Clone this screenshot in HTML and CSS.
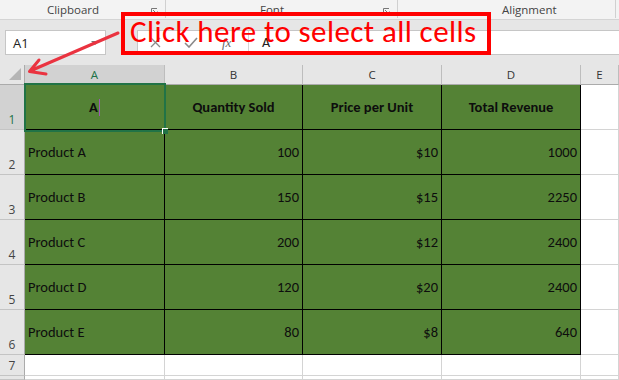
FILE: index.html
```html
<!DOCTYPE html>
<html>
<head>
<meta charset="utf-8">
<link rel="stylesheet" href="styles.css">
</head>
<body>
<div class="app">
  <div class="ribbon">
    <div class="group g1"><span>Clipboard</span>
      <svg class="launcher" viewBox="0 0 8 8"><path d="M0.5 6V0.5H6M2 2L6.5 6.5M3.5 6.5H6.5V3.5" fill="none" stroke="#777" stroke-width="1"/></svg>
    </div>
    <div class="group g2"><span>Font</span>
      <svg class="launcher" viewBox="0 0 8 8"><path d="M0.5 6V0.5H6M2 2L6.5 6.5M3.5 6.5H6.5V3.5" fill="none" stroke="#777" stroke-width="1"/></svg>
    </div>
    <div class="group g3"><span>Alignment</span></div>
  </div>

  <div class="formula-row">
    <div class="namebox"><span>A1</span><i class="caret"></i></div>
    <div class="grip"><i></i><i></i><i></i></div>
    <div class="fbar">
      <div class="fbtns">
        <svg class="ico-x" viewBox="0 0 11 11"><path d="M1 1L10 10M10 1L1 10" stroke="#8a8a8a" stroke-width="1.3" fill="none"/></svg>
        <svg class="ico-ok" viewBox="0 0 14 11"><path d="M1 6L5 10L13 1" stroke="#8a8a8a" stroke-width="1.6" fill="none"/></svg>
        <span class="fx">fx</span>
      </div>
      <div class="finput">A</div>
    </div>
  </div>

  <div class="sheet">
    <div class="corner"><svg viewBox="0 0 12 12" class="tri"><path d="M12 0V12H0Z" fill="#b5b5b5"/></svg></div>
    <div class="ch sel">A</div>
    <div class="ch">B</div>
    <div class="ch">C</div>
    <div class="ch">D</div>
    <div class="ch last">E</div>

    <div class="rh sel">1</div>
    <div class="d hd a1"><span>A</span><span class="cursor"></span><div class="selbox"><i class="handle"></i></div></div>
    <div class="d hd">Quantity Sold</div>
    <div class="d hd">Price per Unit</div>
    <div class="d hd">Total Revenue</div>
    <div class="e"></div>

    <div class="rh">2</div>
    <div class="d">Product A</div>
    <div class="d num">100</div>
    <div class="d num">$10</div>
    <div class="d num">1000</div>
    <div class="e"></div>

    <div class="rh">3</div>
    <div class="d">Product B</div>
    <div class="d num">150</div>
    <div class="d num">$15</div>
    <div class="d num">2250</div>
    <div class="e"></div>

    <div class="rh">4</div>
    <div class="d">Product C</div>
    <div class="d num">200</div>
    <div class="d num">$12</div>
    <div class="d num">2400</div>
    <div class="e"></div>

    <div class="rh">5</div>
    <div class="d">Product D</div>
    <div class="d num">120</div>
    <div class="d num">$20</div>
    <div class="d num">2400</div>
    <div class="e"></div>

    <div class="rh">6</div>
    <div class="d">Product E</div>
    <div class="d num">80</div>
    <div class="d num">$8</div>
    <div class="d num">640</div>
    <div class="e"></div>

    <div class="rh">7</div>
    <div class="e"></div>
    <div class="e"></div>
    <div class="e"></div>
    <div class="e"></div>
    <div class="e"></div>

    <div class="rh"></div>
    <div class="e"></div>
    <div class="e"></div>
    <div class="e"></div>
    <div class="e"></div>
    <div class="e"></div>
  </div>

  <div class="callout">Click here to select all cells</div>
  <svg class="arrow" viewBox="0 0 130 90">
    <path d="M118 33L30 71M39 60L29.5 71.5L46 74" fill="none" stroke="#ea3340" stroke-width="3" stroke-linecap="round" stroke-linejoin="round"/>
  </svg>
</div>
</body>
</html>
```

FILE: styles.css
```css
* { box-sizing: border-box; }
html, body { margin: 0; padding: 0; }
body {
  width: 619px;
  height: 380px;
  overflow: hidden;
  background: #fff;
  font-family: "Open Sans", "Noto Sans", sans-serif;
}
.app {
  position: relative;
  width: 619px;
  height: 380px;
  overflow: hidden;
}

/* ribbon group labels */
.ribbon {
  height: 20px;
  background: #f3f3f3;
  border-bottom: 1px solid #d4d4d4;
  display: flex;
}
.group {
  position: relative;
  height: 18px;
  border-right: 1px solid #d0d0d0;
  font-size: 11.5px;
  color: #444;
  line-height: 20px;
  display: flex;
}
.g1 { width: 166px; justify-content: center; padding-right: 19px; }
.g2 { width: 232px; justify-content: center; padding-right: 19px; }
.g3 { width: 218px; padding-left: 104px; }
.launcher {
  position: absolute;
  right: 6px;
  top: 8px;
  width: 8px;
  height: 8px;
}

/* formula bar */
.formula-row {
  height: 45px;
  background: #e6e6e6;
  display: flex;
  align-items: flex-start;
  padding-top: 10px;
  padding-left: 5px;
}
.namebox {
  position: relative;
  width: 101px;
  height: 25px;
  background: #fff;
  border: 1px solid #c6c6c6;
  display: flex;
  align-items: center;
  padding-left: 7px;
  font-size: 13px;
  color: #222;
}
.caret {
  position: absolute;
  right: 6px;
  top: 10px;
  border-left: 4px solid transparent;
  border-right: 4px solid transparent;
  border-top: 4px solid #777;
}
.grip {
  width: 31px;
  height: 25px;
  display: flex;
  flex-direction: column;
  align-items: center;
  justify-content: center;
  gap: 2px;
}
.grip i {
  width: 2px;
  height: 2px;
  background: #999;
}
.fbar {
  flex: 1;
  height: 25px;
  background: #fff;
  border: 1px solid #c6c6c6;
  border-right: none;
  display: flex;
  align-items: center;
}
.fbtns {
  width: 111px;
  height: 23px;
  display: flex;
  align-items: center;
  border-right: 1px solid #d4d4d4;
}
.ico-x { width: 11px; height: 11px; margin-left: 12px; }
.ico-ok { width: 14px; height: 11px; margin-left: 23px; }
.fx {
  margin-left: 24px;
  font-family: "Liberation Serif", serif;
  font-style: italic;
  font-size: 13px;
  color: #666;
}
.finput {
  padding-left: 13px;
  font-family: Carlito, Lato, sans-serif;
  font-size: 14px;
  color: #222;
}

/* sheet grid */
.sheet {
  display: grid;
  grid-template-columns: 25px 140px 138px 139px 139px 38px;
  grid-template-rows: 20px repeat(6, 45px) 21px 1fr;
  height: 315px;
}
.corner {
  background: #e6e6e6;
  border-right: 1px solid #ababab;
  border-bottom: 1px solid #ababab;
  display: flex;
  align-items: flex-end;
  justify-content: flex-end;
  padding: 0 3px 4px 0;
}
.tri { width: 12px; height: 12px; }
.ch {
  background: #e6e6e6;
  border-right: 1px solid #bdbdbd;
  border-bottom: 1px solid #ababab;
  font-size: 11.5px;
  color: #333;
  display: flex;
  align-items: center;
  justify-content: center;
}
.ch.sel { background: #d2d2d2; color: #217346; }
.rh {
  background: #e6e6e6;
  border-right: 1px solid #ababab;
  border-bottom: 1px solid #c4c4c4;
  font-size: 12px;
  line-height: 14px;
  color: #444;
  display: flex;
  align-items: flex-end;
  justify-content: center;
  padding-bottom: 2px;
}
.rh.sel { background: #d2d2d2; color: #217346; }

.d {
  background: #548235;
  border-right: 1px solid #000;
  border-bottom: 1px solid #000;
  font-family: Carlito, Lato, sans-serif;
  font-size: 14.5px;
  color: #0d0d0d;
  display: flex;
  align-items: center;
  padding: 0 3px;
  white-space: nowrap;
}
.hd { font-weight: 700; justify-content: center; }
.num { justify-content: flex-end; }
.e {
  background: #fff;
  border-right: 1px solid #d4d4d4;
  border-bottom: 1px solid #d4d4d4;
}

.a1 { position: relative; }
.cursor {
  display: inline-block;
  width: 1px;
  height: 17px;
  background: #9b59b6;
  margin-left: 1px;
}
.selbox {
  position: absolute;
  left: -1px;
  top: -2px;
  width: 142px;
  height: 49px;
  border: 2px solid #217346;
}
.handle {
  position: absolute;
  right: -4px;
  bottom: -4px;
  width: 6px;
  height: 6px;
  background: #217346;
  border-left: 1px solid #fff;
  border-top: 1px solid #fff;
}

/* annotation overlay */
.callout {
  position: absolute;
  left: 121px;
  top: 12px;
  width: 370px;
  height: 43px;
  border: 4px solid #ff0000;
  color: #ff0000;
  font-family: Carlito, Lato, sans-serif;
  font-size: 31px;
  letter-spacing: 0.4px;
  line-height: 31px;
  padding-left: 5px;
  white-space: nowrap;
}
.arrow {
  position: absolute;
  left: 0;
  top: 0;
  width: 130px;
  height: 90px;
}
```
